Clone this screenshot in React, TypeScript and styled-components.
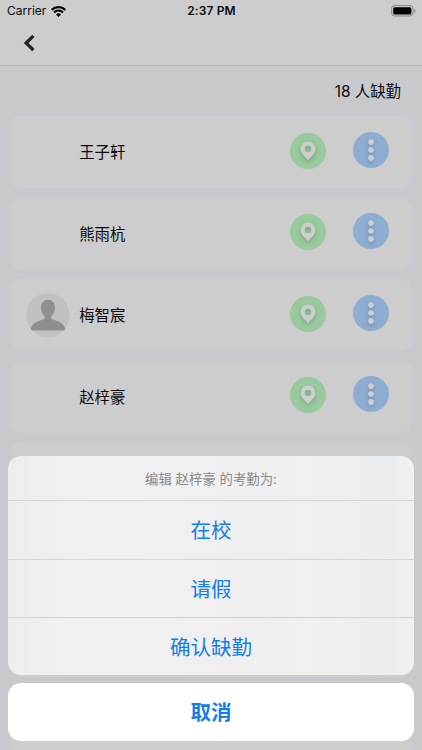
import React from "react";
import styled, { createGlobalStyle } from "styled-components";

const Global = createGlobalStyle`
  * { box-sizing: border-box; }
  body { margin: 0; background: #c8c9cd; overflow: hidden; }
  button { border: 0; padding: 0; margin: 0; font: inherit; color: inherit; background: none; }
`;

const Screen = styled.div`
  position: relative;
  width: 422px;
  height: 750px;
  overflow: hidden;
  display: flex;
  flex-direction: column;
  background: #c8c9cd;
  color: #0b0b0c;
  font-family: Inter, "Noto Sans CJK SC", sans-serif;
`;

const Header = styled.header`
  flex: none;
  height: 66px;
  background: #cdcdcd;
  border-bottom: 1px solid #b6b6ba;
`;

const StatusBar = styled.div`
  display: grid;
  grid-template-columns: 1fr auto 1fr;
  align-items: center;
  height: 22px;
  padding: 0 6px 0 7px;
  font-size: 12px;
  line-height: 22px;
`;

const Carrier = styled.div`
  display: flex;
  align-items: center;
  gap: 5px;
`;

const Clock = styled.div`
  font-weight: 600;
  letter-spacing: 0.1px;
`;

const BatterySlot = styled.div`
  display: flex;
  justify-content: flex-end;
`;

const BackButton = styled.button`
  display: block;
  margin: 11px 0 0 22px;
  height: 20px;
`;

const Summary = styled.div`
  flex: none;
  height: 50px;
  padding: 1px 21px 0 0;
  text-align: right;
  font-size: 15.4px;
  line-height: 50px;
`;

const List = styled.div`
  display: flex;
  flex-direction: column;
  gap: 9.5px;
  padding: 0 11px;
`;

const Card = styled.div`
  flex: none;
  display: flex;
  align-items: center;
  height: 72px;
  padding: 0 22.5px 0 15px;
  border-radius: 10px;
  background: #cdcdcd;
`;

const AvatarSlot = styled.div`
  width: 44px;
  height: 44px;
  margin: 0 9.5px 0 -0.3px;
`;

const Name = styled.div`
  flex: 1;
  padding-top: 2px;
  font-size: 15.4px;
  line-height: 24px;
`;

const RoundButton = styled.button<{ $tone: "green" | "blue" }>`
  display: flex;
  align-items: center;
  justify-content: center;
  width: 36px;
  height: 36px;
  border-radius: 50%;
  background: ${(p) => (p.$tone === "green" ? "#98ca9d" : "#8eadd2")};
  margin-left: ${(p) => (p.$tone === "green" ? 0 : 27)}px;
  margin-bottom: ${(p) => (p.$tone === "green" ? 3 : 5)}px;
  svg { filter: drop-shadow(0 2px 2px rgba(40, 60, 70, 0.28)); overflow: visible; }
`;

const SheetLayer = styled.div`
  position: absolute;
  inset: 455.6px 8.3px auto;
  display: flex;
  flex-direction: column;
  gap: 8.4px;
`;

const Sheet = styled.div`
  height: 219.4px;
  border-radius: 13px;
  overflow: hidden;
  background: linear-gradient(90deg, #edefef 0%, #f0f0f0 25%, #efefef 65%, #eff0ee 80%, #ebeef1 94%, #eff0f1 100%);
`;

const SheetTitle = styled.div`
  height: 44.6px;
  padding-top: 1px;
  text-align: center;
  font-size: 13.4px;
  line-height: 44px;
  color: #8b8b8c;
`;

const SheetAction = styled.button`
  display: block;
  width: 100%;
  height: 58.4px;
  padding-top: 1px;
  border-top: 1px solid #d3d4d6;
  font-size: 20.5px;
  line-height: 58px;
  color: #147cec;
`;

const CancelButton = styled.button`
  height: 58px;
  padding-top: 1px;
  border-radius: 13px;
  background: #fff;
  color: #147cec;
  font-size: 20.5px;
  font-weight: 600;
  line-height: 58px;
`;

const WifiIcon = () => (
  <svg width="15" height="11" viewBox="0 0 15 11">
    <path d="M.7 3.9a9.8 9.8 0 0 1 13.6 0" fill="none" stroke="#000" strokeWidth="2.2" />
    <path d="M3 6.5a6.3 6.3 0 0 1 9 0" fill="none" stroke="#000" strokeWidth="2" />
    <path d="M5 8.5a3.5 3.5 0 0 1 5 0L7.5 11Z" />
  </svg>
);

const BatteryIcon = () => (
  <svg width="25" height="12" viewBox="0 0 25 12">
    <rect x=".6" y=".6" width="21.4" height="10.4" rx="3" fill="none" stroke="#858585" />
    <rect x="2.2" y="2.2" width="18.2" height="7.2" rx="1.5" />
    <path d="M23.2 4v3.8q1.3-.6 1.3-1.9T23.2 4Z" fill="#858585" />
  </svg>
);

const BackIcon = () => (
  <svg width="14" height="20" viewBox="0 0 14 20">
    <path d="M11.4 2.8 4.1 10l7.3 7.2" fill="none" stroke="#242425" strokeWidth="3.3" />
  </svg>
);

const PinIcon = () => (
  <svg width="16" height="20" viewBox="0 0 16 20">
    <path
      fillRule="evenodd"
      fill="#cdcfce"
      d="M8 .6a7.4 7.4 0 0 0-7.4 7.4C.6 12.7 5.5 16.2 8 19.2c2.5-3 7.4-6.5 7.4-11.2A7.4 7.4 0 0 0 8 .6Zm0 4.1a3.2 3.2 0 1 1 0 6.4 3.2 3.2 0 0 1 0-6.4Z"
    />
  </svg>
);

const DotsIcon = () => (
  <svg width="6" height="22" viewBox="0 0 6 22">
    {[3.1, 11, 18.9].map((y) => (
      <circle key={y} cx="3" cy={y} r="2.8" fill="#cdcfd1" />
    ))}
  </svg>
);

const Avatar = () => (
  <svg width="44" height="44" viewBox="0 0 44 44">
    <circle cx="22" cy="22" r="21.8" fill="#c0c1c1" />
    <path
      fill="#8e908f"
      d="M22 6.8c4.1 0 7 3.2 7 7.9 0 3.5-1.4 6.7-3.5 8.4v2.3c0 .7.5 1 1.3 1.2 6.3 1.6 11.5 4.5 12.2 9 .1 1.2-.4 1.9-1.5 1.9h-31c-1.1 0-1.6-.7-1.5-1.9.7-4.5 5.9-7.4 12.2-9 .8-.2 1.3-.5 1.3-1.2v-2.3c-2.1-1.7-3.5-4.9-3.5-8.4 0-4.7 2.9-7.9 7-7.9Z"
    />
  </svg>
);

const students = [
  { name: "王子轩" },
  { name: "熊雨杭" },
  { name: "梅智宸", photo: true },
  { name: "赵梓豪" },
];

const App: React.FC = () => (
  <Screen>
    <Global />
    <Header>
      <StatusBar>
        <Carrier>
          Carrier
          <WifiIcon />
        </Carrier>
        <Clock>2:37 PM</Clock>
        <BatterySlot>
          <BatteryIcon />
        </BatterySlot>
      </StatusBar>
      <BackButton aria-label="返回">
        <BackIcon />
      </BackButton>
    </Header>
    <Summary>18 人缺勤</Summary>
    <List>
      {students.map((s) => (
        <Card key={s.name}>
          <AvatarSlot>{s.photo && <Avatar />}</AvatarSlot>
          <Name>{s.name}</Name>
          <RoundButton $tone="green">
            <PinIcon />
          </RoundButton>
          <RoundButton $tone="blue">
            <DotsIcon />
          </RoundButton>
        </Card>
      ))}
      <Card />
      <Card />
      <Card />
      <Card />
    </List>
    <SheetLayer>
      <Sheet>
        <SheetTitle>编辑 赵梓豪 的考勤为:</SheetTitle>
        <SheetAction>在校</SheetAction>
        <SheetAction>请假</SheetAction>
        <SheetAction>确认缺勤</SheetAction>
      </Sheet>
      <CancelButton>取消</CancelButton>
    </SheetLayer>
  </Screen>
);

export default App;
